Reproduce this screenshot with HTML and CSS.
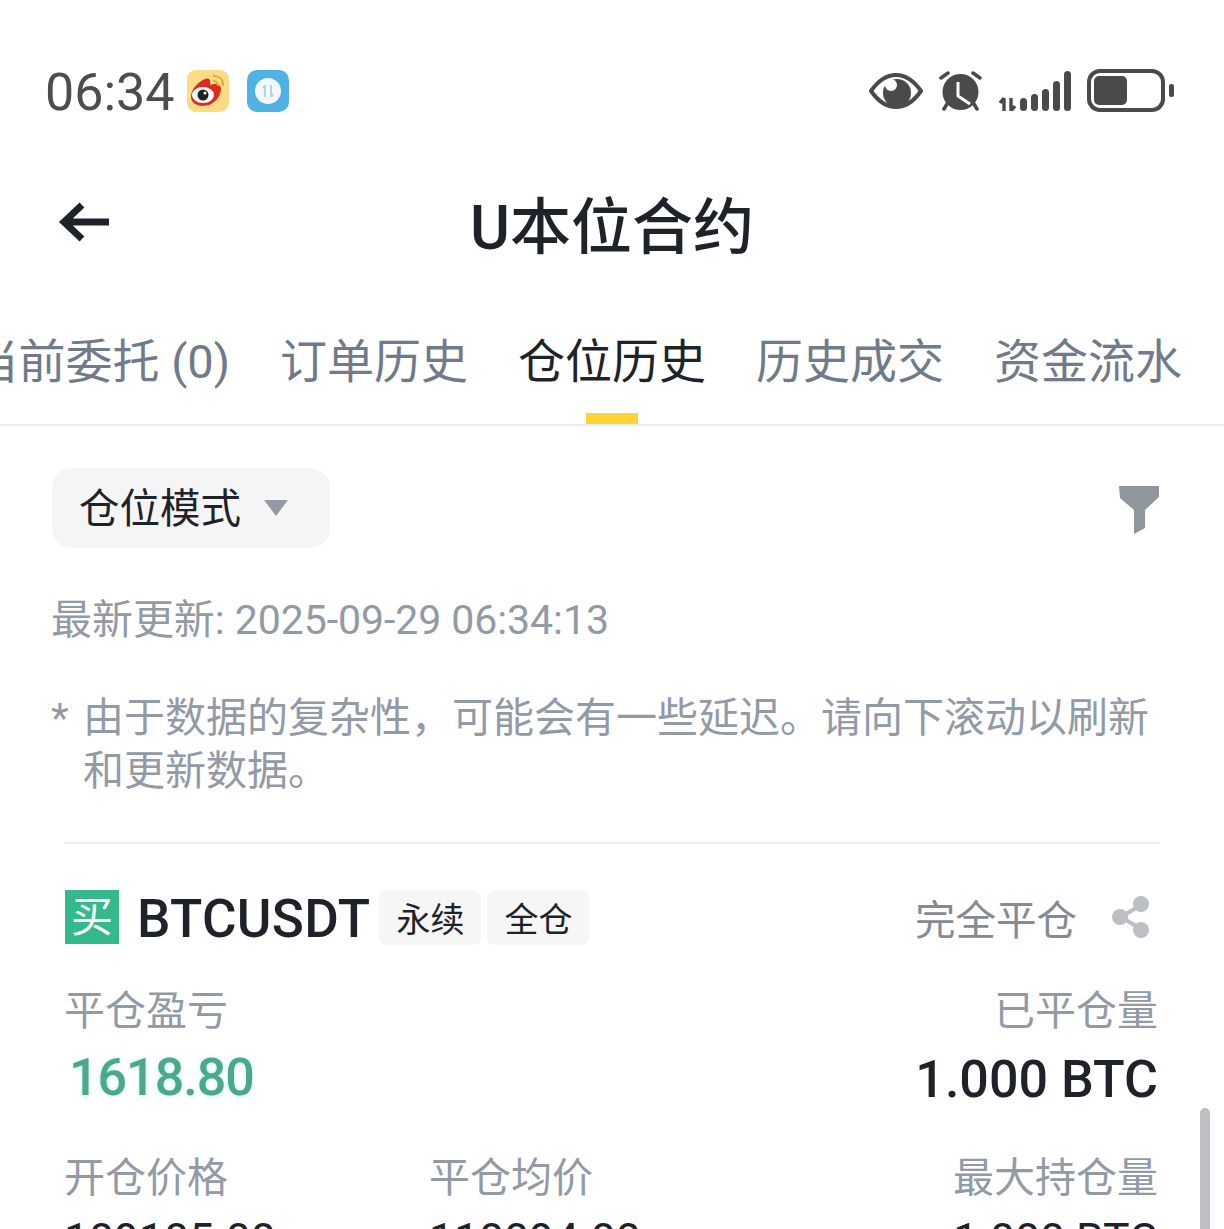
FILE: index.html
```html
<!DOCTYPE html>
<html lang="zh-CN">
<head>
  <meta charset="UTF-8">
  <meta name="viewport" content="width=device-width, initial-scale=1.0">
  <title>U本位合约</title>
  <link rel="stylesheet" href="styles.css">
</head>
<body>
  <div class="status-bar">
    <div class="status-left">
      <span class="clock">06:34</span>
      <svg class="app-icon" viewBox="0 0 42 42">
        <rect width="42" height="42" rx="9" fill="#fbdc85"/>
        <path d="M4 27c0-8 7-15 14-18 5-2 6 2 5 6 5-2 11-1 11 4 0 8-8 17-18 17-7 0-12-4-12-9z" fill="#dd2a22"/>
        <ellipse cx="16" cy="25" rx="11" ry="8" fill="#fff"/>
        <circle cx="16" cy="25" r="5.500" fill="#222"/>
        <circle cx="18" cy="23" r="1.500" fill="#fff"/>
        <path d="M27 6c5 0 9 3 9 9M27 11c2 0 4 2 4 4" fill="none" stroke="#e8a93a" stroke-width="2.200" stroke-linecap="round"/>
      </svg>
      <svg class="app-icon app-icon-net" viewBox="0 0 42 42">
        <rect width="42" height="42" rx="10" fill="#4fb2e3"/>
        <circle cx="21" cy="21" r="13" fill="#f2f8fb"/>
        <path d="M18 15v12M18 15l-2 3M24 15v12M24 27l2-3" fill="none" stroke="#b9d3df" stroke-width="2"/>
      </svg>
    </div>
    <div class="status-right">
      <svg class="icon-eye" viewBox="0 0 54 36">
        <path d="M2 18C9 8 17 2 27 2s18 6 25 16c-7 10-15 16-25 16S9 28 2 18z" fill="none" stroke="#4a4a4a" stroke-width="4"/>
        <circle cx="28" cy="20" r="14" fill="#4a4a4a"/>
        <circle cx="22" cy="12" r="6" fill="#fff"/>
      </svg>
      <svg class="icon-alarm" viewBox="0 0 43 40">
        <path d="M2 7l7-5M34 2l7 5" stroke="#4a4a4a" stroke-width="3.500" stroke-linecap="round"/>
        <path d="M8 33l-3 5M35 33l3 5" stroke="#4a4a4a" stroke-width="3.500" stroke-linecap="round"/>
        <circle cx="21.500" cy="21" r="18" fill="#4a4a4a"/>
        <path d="M19 11v14l12 8" fill="none" stroke="#fff" stroke-width="3"/>
      </svg>
      <svg class="icon-signal" viewBox="0 0 73 40">
        <path d="M5 27v13M5 27l-4 5M12 27v13M12 40l4-5" fill="none" stroke="#4a4a4a" stroke-width="3.400"/>
        <rect x="21" y="27" width="7" height="13" rx="3.500" fill="#4a4a4a"/>
        <rect x="32" y="23" width="7" height="17" rx="3.500" fill="#4a4a4a"/>
        <rect x="43" y="18" width="7" height="22" rx="3.500" fill="#4a4a4a"/>
        <rect x="54" y="10" width="7" height="30" rx="3.500" fill="#4a4a4a"/>
        <rect x="65" y="0" width="7" height="40" rx="3.500" fill="#4a4a4a"/>
      </svg>
      <div class="battery">
        <div class="battery-body"><div class="battery-level"></div></div>
        <div class="battery-cap"></div>
      </div>
    </div>
  </div>

  <div class="nav-bar">
    <svg class="back-icon" viewBox="0 0 52 40">
      <path d="M51 20H6M24 3L6 20l18 17" fill="none" stroke="#1e2329" stroke-width="7"/>
    </svg>
    <h1 class="nav-title">U本位合约</h1>
  </div>

  <div class="tabs">
    <span class="tab">当前委托 (0)</span>
    <span class="tab">订单历史</span>
    <span class="tab tab-active">仓位历史</span>
    <span class="tab">历史成交</span>
    <span class="tab">资金流水</span>
  </div>

  <div class="filter-row">
    <div class="mode-select">
      <span class="mode-label">仓位模式</span>
      <span class="caret"></span>
    </div>
    <svg class="filter-icon" viewBox="0 0 41 48">
      <path d="M0 0h40v11L26 24v18l-11 6V24L1 12z" fill="#8f969e"/>
    </svg>
  </div>

  <p class="updated">最新更新: 2025-09-29 06:34:13</p>

  <div class="notice">
    <span class="notice-mark">*</span>
    <p class="notice-text">由于数据的复杂性，可能会有一些延迟。请向下滚动以刷新和更新数据。</p>
  </div>

  <div class="card">
    <div class="card-head">
      <span class="side-badge">买</span>
      <span class="symbol">BTCUSDT</span>
      <span class="tag">永续</span>
      <span class="tag">全仓</span>
      <span class="status">完全平仓</span>
      <svg class="share-icon" viewBox="0 0 38 42">
        <path d="M29 9L9 21l20 12" fill="none" stroke="#bcbfc4" stroke-width="4"/>
        <circle cx="29" cy="8" r="8" fill="#bcbfc4"/>
        <circle cx="8" cy="21" r="8" fill="#bcbfc4"/>
        <circle cx="29" cy="34" r="8" fill="#bcbfc4"/>
      </svg>
    </div>

    <div class="stats-top">
      <div>
        <div class="label">平仓盈亏</div>
        <div class="value value-green">1618.80</div>
      </div>
      <div class="align-right">
        <div class="label">已平仓量</div>
        <div class="value">1.000 BTC</div>
      </div>
    </div>

    <div class="stats-bottom">
      <div>
        <div class="label">开仓价格</div>
        <div class="value-small">109105.00</div>
      </div>
      <div>
        <div class="label">平仓均价</div>
        <div class="value-small">110094.00</div>
      </div>
      <div class="align-right">
        <div class="label">最大持仓量</div>
        <div class="value-small">1.000 BTC</div>
      </div>
    </div>
  </div>

  <div class="scrollbar"></div>
</body>
</html>
```

FILE: styles.css
```css
html, body {
  height: 1229px;
  overflow: hidden;
}
body {
  position: relative;
  margin: 0;
  padding: 0;
  background: #fff;
  color: #1e2329;
  font-family: Roboto, "Noto Sans CJK SC", sans-serif;
}
p, h1 {
  margin: 0;
}

/* status bar */
.status-bar {
  height: 132px;
  padding: 50px 50px 0 45px;
  box-sizing: border-box;
  display: flex;
  justify-content: space-between;
  align-items: flex-start;
}
.status-left {
  display: flex;
  align-items: center;
  height: 84px;
}
.clock {
  font-size: 52px;
  color: #4d4d4d;
  margin-right: 12px;
}
.app-icon {
  width: 42px;
  height: 42px;
  margin-top: -2px;
}
.app-icon-net {
  margin-left: 18px;
}
.status-right {
  display: flex;
  align-items: center;
  height: 84px;
  margin-top: -1px;
}
.icon-eye {
  width: 54px;
  height: 36px;
}
.icon-alarm {
  width: 43px;
  height: 40px;
  margin-left: 16px;
}
.icon-signal {
  width: 73px;
  height: 40px;
  margin-left: 17px;
}
.battery {
  display: flex;
  align-items: center;
  margin: -2px 0 0 15px;
}
.battery-body {
  width: 78px;
  height: 43px;
  box-sizing: border-box;
  border: 4px solid #4a4a4a;
  border-radius: 13px;
  padding: 3px;
}
.battery-level {
  width: 33px;
  height: 100%;
  background: #4a4a4a;
  border-radius: 5px;
}
.battery-cap {
  width: 5px;
  height: 13px;
  margin-left: 4px;
  background: #4a4a4a;
  border-radius: 2px;
}

/* nav */
.nav-bar {
  height: 180px;
  display: grid;
  grid-template-columns: 1fr auto 1fr;
  align-items: center;
  padding: 12px 58px 0;
  box-sizing: border-box;
}
.back-icon {
  width: 52px;
  height: 40px;
  margin-top: -12px;
}
.nav-title {
  font-size: 61px;
  font-weight: 500;
  line-height: 64px;
}

/* tabs */
.tabs {
  height: 115px;
  display: flex;
  justify-content: flex-end;
  gap: 50px;
  padding: 19px 42px 0 0;
  box-sizing: border-box;
  border-bottom: 2px solid #eaecef;
  overflow: hidden;
  margin-top: -1px;
}
.tab {
  position: relative;
  flex: none;
  font-size: 47px;
  line-height: 64px;
  color: #707a8a;
}
.tab-active {
  color: #1e2329;
}
.tab-active::after {
  content: "";
  position: absolute;
  left: 50%;
  bottom: 0;
  width: 52px;
  height: 11px;
  margin-left: -26px;
  background: #fcd535;
}

/* filter */
.filter-row {
  display: flex;
  justify-content: space-between;
  align-items: center;
  padding: 42px 64px 0 52px;
}
.mode-select {
  width: 278px;
  height: 80px;
  padding: 0 42px 0 27px;
  box-sizing: border-box;
  display: flex;
  align-items: center;
  justify-content: space-between;
  background: #f5f5f5;
  border-radius: 20px;
  font-size: 40.500px;
}
.mode-label {
  margin-top: -6px;
}
.caret {
  width: 0;
  height: 0;
  border-left: 12px solid transparent;
  border-right: 12px solid transparent;
  border-top: 16px solid #929aa5;
}
.filter-icon {
  width: 41px;
  height: 48px;
  margin-top: 3px;
}

.updated {
  margin: 47px 0 0 51px;
  font-size: 41px;
  line-height: 50px;
  letter-spacing: -0.060px;
  color: #929aa5;
}

.notice {
  display: flex;
  margin: 47px 64px 0 51px;
  color: #929aa5;
  font-size: 41px;
  line-height: 53px;
}
.notice-mark {
  flex: none;
  width: 32px;
}
.notice-text {
  flex: 1;
}

/* position card */
.card {
  margin: 44px 64px 0;
  padding-top: 45px;
  border-top: 2px solid #eaecef;
}
.card-head {
  display: flex;
  align-items: center;
  height: 55px;
}
.side-badge {
  width: 54px;
  height: 54px;
  padding-bottom: 6px;
  box-sizing: border-box;
  display: flex;
  align-items: center;
  justify-content: center;
  background: #34b98a;
  color: #fff;
  font-size: 42px;
  margin-left: 1px;
}
.symbol {
  font-size: 53px;
  font-weight: 500;
  letter-spacing: 0.300px;
  margin: 4px 9px 0 18px;
}
.tag {
  width: 102px;
  height: 55px;
  margin: 1px 6px 0 0;
  display: flex;
  align-items: center;
  justify-content: center;
  background: #f6f6f6;
  border-radius: 8px;
  font-size: 34px;
}
.status {
  margin: 2px 0 0 auto;
  font-size: 40.500px;
  color: #858b94;
}
.share-icon {
  width: 38px;
  height: 42px;
  margin-left: 35px;
  margin-right: 10px;
}
.stats-top {
  display: flex;
  justify-content: space-between;
  padding: 42px 2px 0 0;
}
.label {
  font-size: 41px;
  line-height: 50px;
  color: #929aa5;
}
.value {
  font-size: 52px;
  font-weight: 500;
  line-height: 62px;
  margin-top: 13px;
}
.value-green {
  color: #4aa88c;
  padding-left: 5px;
  margin-top: 11px;
  letter-spacing: -1px;
  text-shadow: 0 0 4px #c4f0e0;
}
.align-right {
  text-align: right;
}
.stats-bottom {
  display: grid;
  grid-template-columns: 365px 1fr auto;
  padding: 42px 2px 0 0;
}
.value-small {
  font-size: 44.500px;
  line-height: 50px;
  margin-top: 12px;
}

.scrollbar {
  position: absolute;
  left: 1200px;
  top: 1108px;
  width: 10px;
  height: 140px;
  border-radius: 5px;
  background: #bcbfc4;
}
```
